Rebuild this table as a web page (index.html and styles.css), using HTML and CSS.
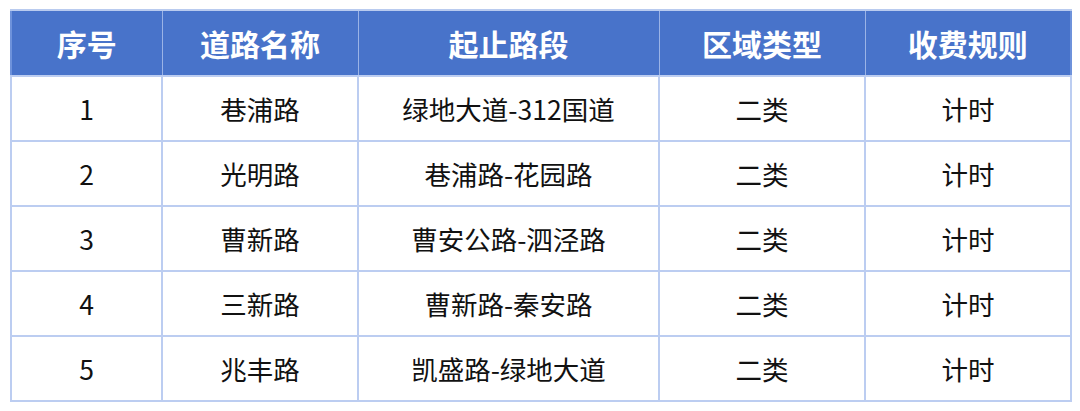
FILE: index.html
```html
<!DOCTYPE html>
<html lang="zh">
<head>
<meta charset="utf-8">
<link rel="stylesheet" href="styles.css">
</head>
<body>
<table class="fee-table">
  <colgroup>
    <col class="c1"><col class="c2"><col class="c3"><col class="c4"><col class="c5">
  </colgroup>
  <thead>
    <tr><th>序号</th><th>道路名称</th><th>起止路段</th><th>区域类型</th><th>收费规则</th></tr>
  </thead>
  <tbody>
    <tr><td>1</td><td>巷浦路</td><td>绿地大道-312国道</td><td>二类</td><td>计时</td></tr>
    <tr><td>2</td><td>光明路</td><td>巷浦路-花园路</td><td>二类</td><td>计时</td></tr>
    <tr><td>3</td><td>曹新路</td><td>曹安公路-泗泾路</td><td>二类</td><td>计时</td></tr>
    <tr><td>4</td><td>三新路</td><td>曹新路-秦安路</td><td>二类</td><td>计时</td></tr>
    <tr><td>5</td><td>兆丰路</td><td>凯盛路-绿地大道</td><td>二类</td><td>计时</td></tr>
  </tbody>
</table>
</body>
</html>
```
FILE: styles.css
```css
html, body {
  margin: 0;
  padding: 0;
  background: #ffffff;
}
body {
  padding: 9px 10px 0 10px;
  font-family: "Noto Sans CJK SC", "Noto Sans", sans-serif;
}
.fee-table {
  width: 1060px;
  border-collapse: collapse;
  table-layout: fixed;
  border: 2px solid #6e92db;
}
.c1 { width: 151px; }
.c2 { width: 196px; }
.c3 { width: 301px; }
.c4 { width: 206px; }
.c5 { width: 206px; }
.fee-table th {
  height: 64px;
  background: #4873ca;
  color: #ffffff;
  font-size: 30px;
  font-weight: 700;
  border-left: 1px solid #9bb3e6;
  border-top: 2px solid #b9cbef;
  padding: 0;
  text-align: center;
  vertical-align: middle;
}
.fee-table td {
  height: 63px;
  font-size: 26.5px;
  color: #111111;
  border: 2px solid #bccdf1;
  padding: 0;
  text-align: center;
  vertical-align: middle;
}
```
